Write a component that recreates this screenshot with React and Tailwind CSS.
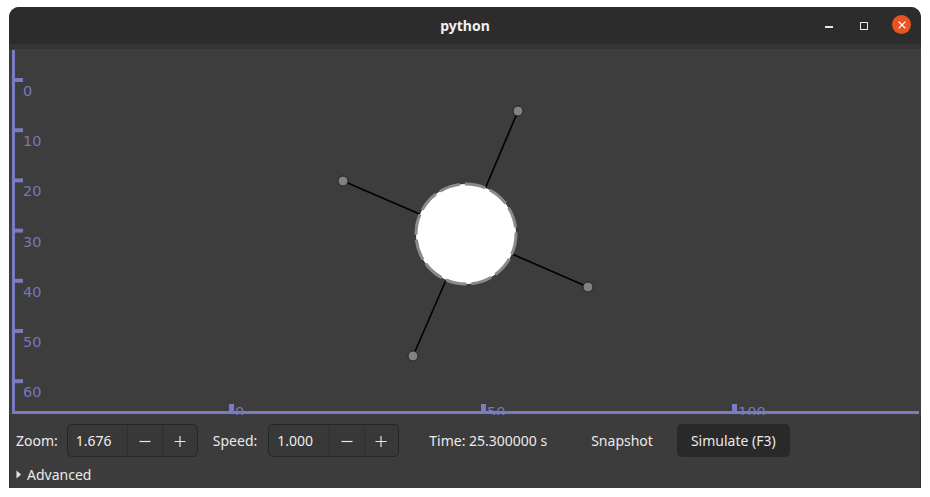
import { X } from 'lucide-react';

const yTicks = [0, 10, 20, 30, 40, 50, 60];
const xTicks = [
  { v: 0, x: 231 },
  { v: 50, x: 483 },
  { v: 100, x: 734 },
];

const center = { x: 466, y: 234 };
const arms = [
  { x: 518, y: 111 },
  { x: 343, y: 181 },
  { x: 588, y: 287 },
  { x: 413, y: 356 },
];

const AXIS = '#7b7bc2';

const SpinBox = ({ value }) => (
  <div className="flex h-[33px] w-[131px] items-stretch rounded-[5px] border border-[#262626] bg-[#383838]">
    <div className="flex w-[60px] items-center pl-[8px] text-[#eeeeee]">{value}</div>
    <button className="flex w-[35px] items-center justify-center border-l border-[#2e2e2e] text-[#e6e6e6]">
      <svg width="12" height="12" viewBox="0 0 12 12">
        <path d="M0.5 6.5h11" stroke="currentColor" strokeWidth="1.2" />
      </svg>
    </button>
    <button className="flex w-[35px] items-center justify-center border-l border-[#2e2e2e] text-[#e6e6e6]">
      <svg width="12" height="12" viewBox="0 0 12 12">
        <path d="M0.5 6.5h11M6 1v11" stroke="currentColor" strokeWidth="1.2" />
      </svg>
    </button>
  </div>
);

const Canvas = () => (
  <svg width="910" height="366" viewBox="10 49 910 366" className="block">
    <rect x="10" y="49" width="910" height="366" fill="#3d3d3d" />

    {/* y axis ticks + labels */}
    {yTicks.map((v, i) => {
      const ty = 80 + i * 50.2;
      return (
        <g key={v}>
          <rect x="15" y={ty - 2} width="8" height="4" fill={AXIS} />
          <text x="23" y={ty + 16} fontSize="14.5" fill="#7676bb" fontFamily="'DejaVu Sans', sans-serif">
            {v}
          </text>
        </g>
      );
    })}

    {/* x axis ticks + labels, cut by the axis as in the app */}
    {xTicks.map((t) => (
      <g key={t.v}>
        <rect x={t.x - 2} y="404" width="5" height="8" fill={AXIS} />
        <text x={t.x + 4} y="417" fontSize="14.5" fill="#7676bb" fontFamily="'DejaVu Sans', sans-serif">
          {t.v}
        </text>
      </g>
    ))}

    <rect x="12" y="50" width="3" height="364" fill={AXIS} />
    <rect x="12" y="411" width="907" height="3" fill={AXIS} />

    {/* body with arms */}
    {arms.map((a, i) => (
      <line key={i} x1={center.x} y1={center.y} x2={a.x} y2={a.y} stroke="#000" strokeWidth="1.6" />
    ))}
    <circle cx={center.x} cy={center.y} r="50" fill="#fff" stroke="#8a8a8a" strokeWidth="3" strokeDasharray="21 5" />
    {arms.map((a, i) => (
      <circle key={i} cx={a.x} cy={a.y} r="5" fill="#828282" stroke="#222222" strokeWidth="1" />
    ))}
  </svg>
);

export default function App() {
  return (
    <div
      className="h-[497px] w-[930px] bg-white pl-[9px] pt-[7px] text-[14px]"
      style={{ fontFamily: "'Noto Sans', 'Open Sans', sans-serif" }}
    >
      <div className="flex h-[481px] w-[912px] flex-col overflow-hidden rounded-t-[10px] bg-[#3c3c3c]">
        {/* title bar */}
        <div className="relative flex h-[37px] items-center justify-center bg-[#2c2c2c]">
          <span className="text-[14px] font-bold text-[#f0f0f0]">python</span>
          <div className="absolute right-[10px] top-0 flex h-full items-center">
            <div className="mr-[27px] mt-[3px] h-[1.5px] w-[8px] bg-[#e8e8e8]" />
            <div className="mr-[24px] h-[8px] w-[8px] border border-[#e8e8e8]" />
            <div className="mt-[-2px] flex h-[19px] w-[19px] items-center justify-center rounded-full bg-[#e95420]">
              <X size={12} strokeWidth={2.2} color="#ffffff" />
            </div>
          </div>
        </div>
        <div className="h-[5px] bg-[#353535]" />

        {/* canvas */}
        <div className="px-[1px]">
          <Canvas />
        </div>

        {/* controls */}
        <div className="flex flex-1 flex-col border-x border-[#333] text-[#eaeaea]">
          <div className="mt-[9px] flex h-[33px] items-center pl-[6px]">
            <span>Zoom:</span>
            <div className="ml-[9px]">
              <SpinBox value="1.676" />
            </div>
            <span className="ml-[15px]">Speed:</span>
            <div className="ml-[11px]">
              <SpinBox value="1.000" />
            </div>
            <span className="ml-[30px]">Time: 25.300000 s</span>
            <button className="ml-[30px] flex h-[33px] items-center rounded-[5px] px-[14px]">Snapshot</button>
            <button className="ml-[10px] flex h-[33px] items-center rounded-[5px] bg-[#292929] px-[14px]">
              Simulate (F3)
            </button>
          </div>
          <div className="mt-[7px] flex items-center pl-[6px]">
            <svg width="6" height="9" viewBox="0 0 6 9" className="mr-[5px]">
              <path d="M0.5 0.5L5 4.5L0.5 8.5Z" fill="#e6e6e6" />
            </svg>
            <span>Advanced</span>
          </div>
        </div>
      </div>
    </div>
  );
}
